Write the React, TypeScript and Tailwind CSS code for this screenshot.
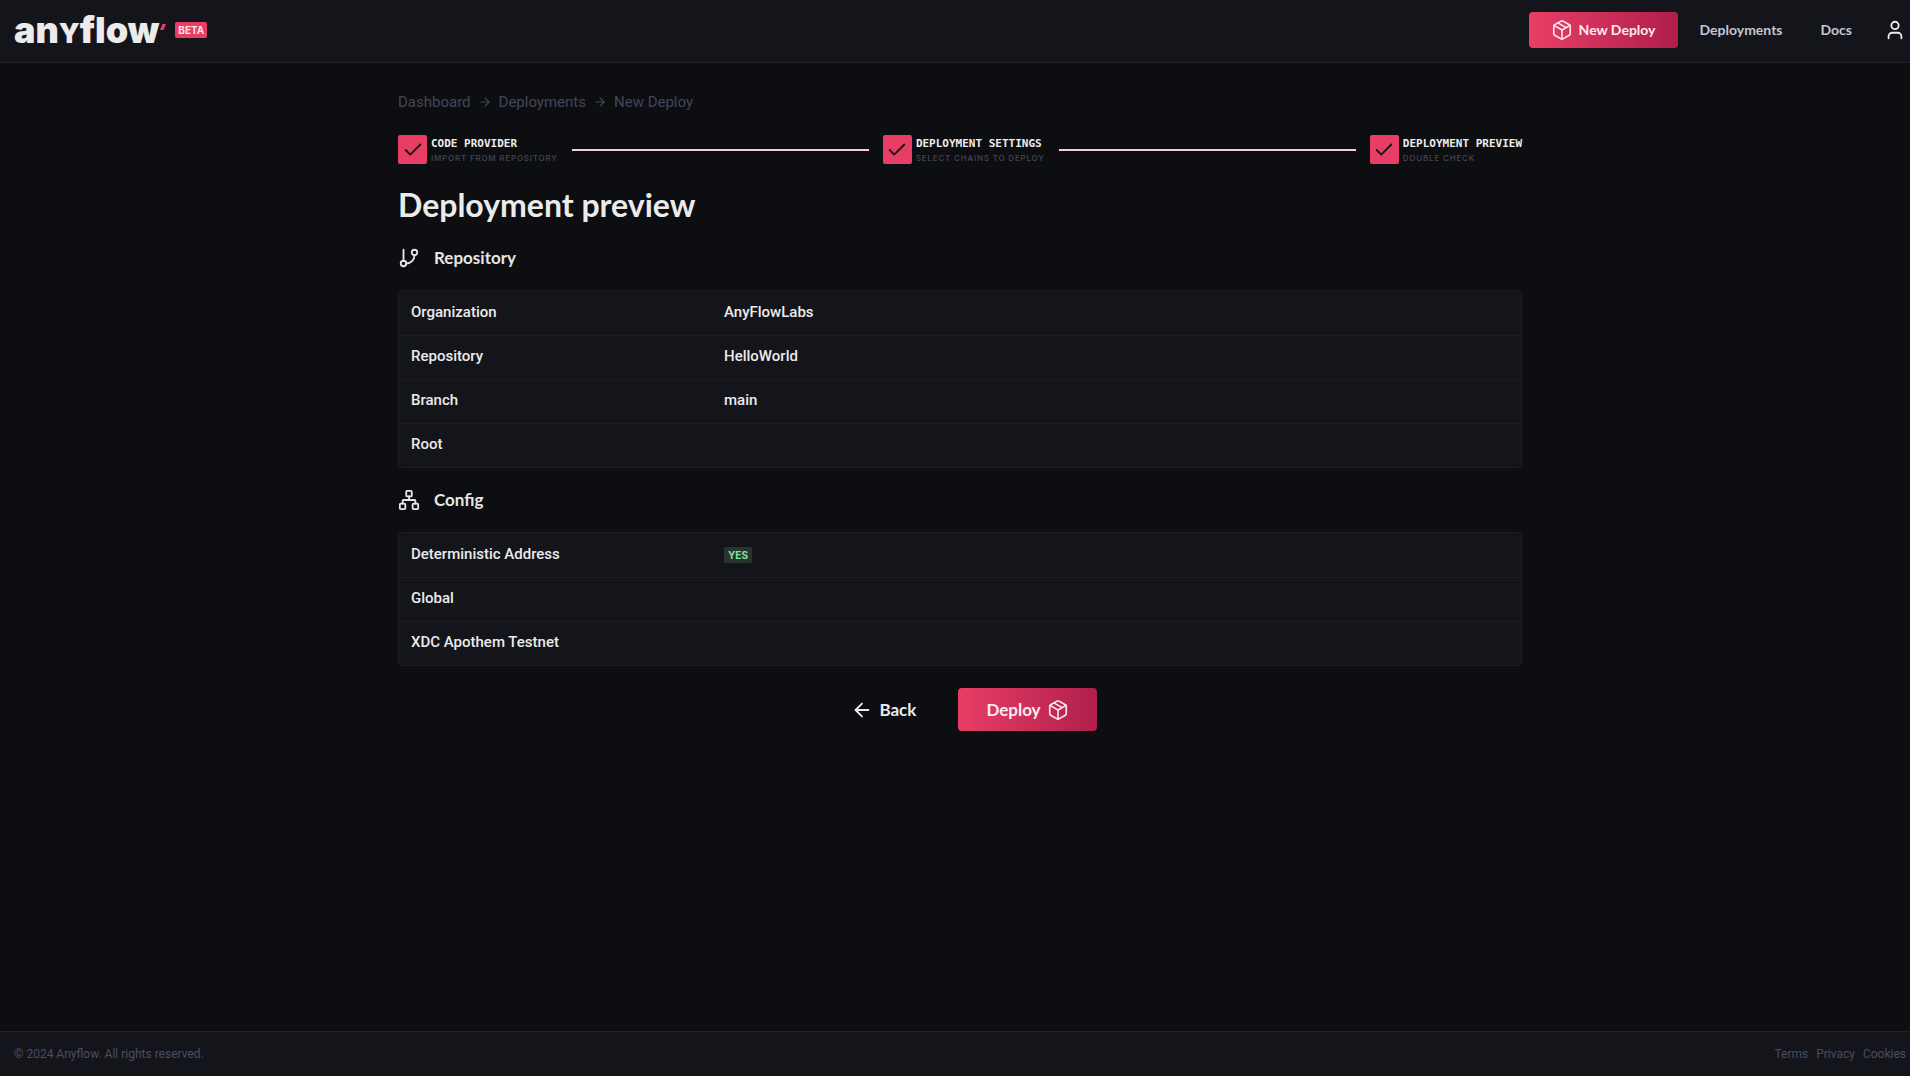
import { Fragment, type ReactNode } from "react";
import { ArrowLeft, ArrowRight, Check, GitBranch, Network, Package, User } from "lucide-react";

const steps = [
  { title: "CODE PROVIDER", detail: "IMPORT FROM REPOSITORY" },
  { title: "DEPLOYMENT SETTINGS", detail: "SELECT CHAINS TO DEPLOY" },
  { title: "DEPLOYMENT PREVIEW", detail: "DOUBLE CHECK" },
];

type Row = { label: string; value?: ReactNode };

const repositoryRows: Row[] = [
  { label: "Organization", value: "AnyFlowLabs" },
  { label: "Repository", value: "HelloWorld" },
  { label: "Branch", value: "main" },
  { label: "Root" },
];

const configRows: Row[] = [
  {
    label: "Deterministic Address",
    value: (
      <span className="inline-block rounded-xs bg-[#28352f] px-1 align-middle font-['Inter',sans-serif] text-[10px] leading-4 font-bold text-[#86e0a4]">
        YES
      </span>
    ),
  },
  { label: "Global" },
  { label: "XDC Apothem Testnet" },
];

function Logo() {
  return (
    <a href="#" aria-label="anyflow home" className="flex items-center pt-1 text-[#ebebeb]">
      <span className="font-['Inter',sans-serif] text-[36px] leading-10 font-black">
        an<span className="text-[27px] uppercase">y</span>flow
      </span>
      <svg viewBox="0 0 8 28" className="h-7 w-2" aria-hidden="true">
        <path d="M3.5 6H7L4.5 12H1Z" fill="#e83e66" />
      </svg>
    </a>
  );
}

function Header() {
  return (
    <header className="flex h-[63px] items-center justify-between border-b border-[#22232a] bg-[#14151a] pr-1 pb-0.5 pl-[14px]">
      <div className="flex items-center gap-2">
        <Logo />
        <span className="rounded-xs bg-[#e83e66] px-[3px] font-['Inter',sans-serif] text-[10px] leading-4 font-bold text-[#fbe3e9]">
          BETA
        </span>
      </div>
      <nav className="flex items-center font-['Lato',sans-serif] text-sm font-bold text-[#c4c6d2]">
        <button className="mr-[22px] flex h-9 items-center gap-1.5 rounded-sm bg-linear-to-r from-[#e83e66] to-[#b01e4b] px-[22px] text-[#fdeaf0]">
          <Package size={22} strokeWidth={1.75} />
          New Deploy
        </button>
        <a href="#" className="mr-[38px]">Deployments</a>
        <a href="#" className="mr-8">Docs</a>
        <button aria-label="Account" className="text-[#ebebeb]">
          <User size={22} strokeWidth={2} />
        </button>
      </nav>
    </header>
  );
}

function Breadcrumb() {
  return (
    <nav aria-label="Breadcrumb" className="flex items-center gap-[7px] text-[15px] leading-6 text-[#434659]">
      <a href="#">Dashboard</a>
      <ArrowRight size={14} strokeWidth={2} />
      <a href="#">Deployments</a>
      <ArrowRight size={14} strokeWidth={2} />
      <a href="#">New Deploy</a>
    </nav>
  );
}

function Stepper() {
  return (
    <ol className="mt-[21px] flex items-center">
      {steps.map((step, i) => (
        <Fragment key={step.title}>
          {i > 0 && <li aria-hidden="true" className="mx-[14px] h-0.5 flex-1 bg-[#ffc9d5]" />}
          <li className="flex items-center gap-1">
            <span className="flex size-[29px] items-center justify-center rounded-xs bg-[#e83e66] text-[#15161a]">
              <Check size={22} strokeWidth={2} />
            </span>
            <span>
              <span className="block font-['DejaVu_Sans_Mono',monospace] text-[11px] leading-4 font-bold text-[#ededed]">
                {step.title}
              </span>
              <span className="block font-['Inter',sans-serif] text-[8px] leading-3 font-medium tracking-widest text-[#434659]">
                {step.detail}
              </span>
            </span>
          </li>
        </Fragment>
      ))}
    </ol>
  );
}

function SectionTitle({ icon, children }: { icon: ReactNode; children: ReactNode }) {
  return (
    <h2 className="flex items-center gap-[14px] font-['Lato',sans-serif] text-[17px] leading-7 font-bold text-[#e6e6e6]">
      {icon}
      {children}
    </h2>
  );
}

function InfoTable({ rows, label }: { rows: Row[]; label: string }) {
  return (
    <div className="mt-[18px] overflow-hidden rounded-sm border border-[#1c1d25] bg-[#14151a]">
      <table aria-label={label} className="w-full table-fixed border-collapse text-left text-[15px] font-medium text-[#ebebeb]">
        <tbody>
          {rows.map((row) => (
            <tr key={row.label} className="h-11 border-b border-[#1c1d25] last:border-b-0">
              <th scope="row" className="w-[313px] px-3 pb-0.5 font-medium">{row.label}</th>
              <td className="px-3 pb-0.5">{row.value}</td>
            </tr>
          ))}
        </tbody>
      </table>
    </div>
  );
}

export default function App() {
  return (
    <div className="flex min-h-screen flex-col bg-[#0d0e12] font-['Roboto',sans-serif]">
      <Header />
      <main className="flex flex-1 flex-col pl-[10px]">
        <div className="mx-auto w-full max-w-[1124px] pt-[27px]">
          <Breadcrumb />
          <Stepper />
          <h1 className="mt-[21px] font-['Lato',sans-serif] text-[32px] leading-10 font-bold text-[#ebebeb]">Deployment preview</h1>
          <div className="mt-[19px]">
            <SectionTitle icon={<GitBranch size={22} strokeWidth={2} />}>Repository</SectionTitle>
            <InfoTable rows={repositoryRows} label="Repository" />
          </div>
          <div className="mt-[18px]">
            <SectionTitle icon={<Network size={22} strokeWidth={2} />}>Config</SectionTitle>
            <InfoTable rows={configRows} label="Config" />
          </div>
          <div className="mt-[22px] flex items-center justify-center gap-[42px] pl-7 font-['Lato',sans-serif] text-[17px] font-bold text-[#ebebeb]">
            <button className="flex items-center gap-1.5">
              <ArrowLeft size={22} strokeWidth={2} />
              Back
            </button>
            <button className="flex h-[43px] items-center gap-1.5 rounded-sm bg-linear-to-r from-[#e83e66] to-[#b01e4b] px-7 text-[#fdeaf0]">
              Deploy
              <Package size={22} strokeWidth={1.75} />
            </button>
          </div>
        </div>
      </main>
      <footer className="flex h-[45px] items-center justify-between border-t border-[#22232a] bg-[#14151a] pr-1 pl-[14px] text-xs text-[#4a4d63]">
        <p>© 2024 Anyflow. All rights reserved.</p>
        <nav className="flex gap-2">
          <a href="#">Terms</a>
          <a href="#">Privacy</a>
          <a href="#">Cookies</a>
        </nav>
      </footer>
    </div>
  );
}
